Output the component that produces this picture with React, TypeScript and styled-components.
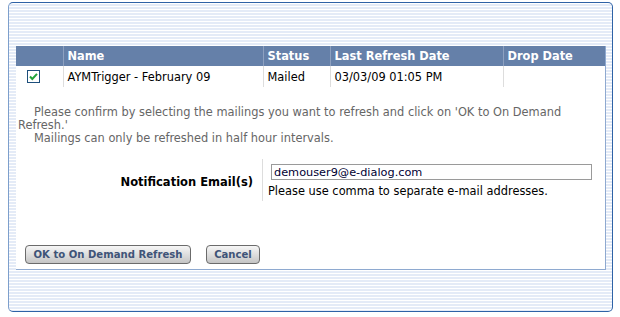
import { createGlobalStyle, styled } from "styled-components";

const GlobalStyle = createGlobalStyle`
  body {
    margin: 0;
    background: #ffffff;
    font-family: "DejaVu Sans", Verdana, sans-serif;
    font-size: 11.4px;
  }
`;

const Frame = styled.div`
  box-sizing: border-box;
  margin: 2px 0 0 8px;
  width: 605px;
  height: 310px;
  padding: 43px 6px 41px 7px;
  border: 1px solid #2e62a6;
  border-left-color: #7d9fcc;
  border-radius: 5px;
  background: repeating-linear-gradient(
    to bottom,
    #ffffff 0 1px,
    #e4ebf7 1px 3px
  );
`;

const Panel = styled.div`
  box-sizing: border-box;
  height: 224px;
  background: #ffffff;
  border-right: 1px solid #8ea9d0;
  border-bottom: 1px solid #8ea9d0;
  display: flex;
  flex-direction: column;
`;

const Grid = styled.table`
  width: 589px;
  border-collapse: collapse;
  table-layout: fixed;
`;

const Head = styled.th`
  box-sizing: border-box;
  height: 20px;
  padding: 0 4px;
  background: #6580a9;
  color: #ffffff;
  font-weight: bold;
  text-align: left;
  white-space: nowrap;
  border-left: 1px solid #8da0c0;
  &:first-child {
    border-left: none;
  }
`;

const Cell = styled.td`
  box-sizing: border-box;
  height: 21px;
  padding: 0 4px;
  color: #000000;
  border-left: 1px solid #dddddd;
  white-space: nowrap;
  &:first-child {
    border-left: none;
    padding-left: 11px;
  }
`;

const Box = styled.span`
  display: block;
  width: 13px;
  height: 13px;
`;

const Notes = styled.div`
  margin-top: 19px;
  padding: 0 2px;
  color: #666666;
  line-height: 13px;
  p {
    margin: 0;
    text-indent: 16px;
  }
`;

const EmailRow = styled.div`
  margin-top: 14px;
  display: grid;
  grid-template-columns: 246px 1px 1fr;
  height: 42px;
`;

const Label = styled.div`
  display: flex;
  align-items: center;
  justify-content: flex-end;
  padding: 4px 9px 0 0;
  font-weight: bold;
  font-size: 11.5px;
  color: #000000;
`;

const Rule = styled.div`
  background: #dddddd;
`;

const Field = styled.div`
  padding: 5px 0 0 5px;
  display: flex;
  flex-direction: column;
  gap: 5px;
`;

const Input = styled.input`
  box-sizing: border-box;
  width: 321px;
  height: 16px;
  margin-left: 3px;
  padding: 0 2px;
  border: 1px solid #9a9a9a;
  font-family: "DejaVu Sans", Verdana, sans-serif;
  font-size: 11.3px;
  color: #000033;
  outline: none;
`;

const Hint = styled.div`
  color: #000000;
  line-height: 13px;
`;

const Buttons = styled.div`
  margin-top: 44px;
  padding-left: 9px;
  display: flex;
  gap: 15px;
`;

const Button = styled.button<{ $w: number }>`
  box-sizing: border-box;
  width: ${(p) => p.$w}px;
  height: 19px;
  padding: 0;
  border: 1px solid #6b6b6b;
  border-radius: 4px;
  background: linear-gradient(to bottom, #f6f6f6, #d9d9d9 60%, #c4c4c4);
  font-family: "DejaVu Sans", Verdana, sans-serif;
  font-size: 10.1px;
  font-weight: bold;
  color: #3f5478;
  white-space: nowrap;
  cursor: pointer;
`;

const cols = [
  { title: "", w: 47 },
  { title: "Name", w: 200 },
  { title: "Status", w: 67 },
  { title: "Last Refresh Date", w: 173 },
  { title: "Drop Date", w: 102 },
];

const CheckIcon = () => (
  <Box>
    <svg width="13" height="13" viewBox="0 0 13 13">
      <rect x="0.5" y="0.5" width="12" height="12" fill="#ffffff" stroke="#1d4f7c" />
      <path d="M3 6.5 L5.3 9 L10 3.8" fill="none" stroke="#22a33a" strokeWidth="2" />
    </svg>
  </Box>
);

export default function App() {
  return (
    <>
      <GlobalStyle />
      <Frame>
        <Panel>
          <Grid>
            <colgroup>
              {cols.map((c, i) => (
                <col key={i} style={{ width: c.w }} />
              ))}
            </colgroup>
            <thead>
              <tr>
                {cols.map((c, i) => (
                  <Head key={i}>{c.title}</Head>
                ))}
              </tr>
            </thead>
            <tbody>
              <tr>
                <Cell>
                  <CheckIcon />
                </Cell>
                <Cell>AYMTrigger - February 09</Cell>
                <Cell>Mailed</Cell>
                <Cell>03/03/09 01:05 PM</Cell>
                <Cell></Cell>
              </tr>
            </tbody>
          </Grid>

          <Notes>
            <p>
              Please confirm by selecting the mailings you want to refresh and click on 'OK to On
              Demand Refresh.'
            </p>
            <p>Mailings can only be refreshed in half hour intervals.</p>
          </Notes>

          <EmailRow>
            <Label>Notification Email(s)</Label>
            <Rule />
            <Field>
              <Input defaultValue="demouser9@e-dialog.com" />
              <Hint>Please use comma to separate e-mail addresses.</Hint>
            </Field>
          </EmailRow>

          <Buttons>
            <Button $w={166}>OK to On Demand Refresh</Button>
            <Button $w={54}>Cancel</Button>
          </Buttons>
        </Panel>
      </Frame>
    </>
  );
}
